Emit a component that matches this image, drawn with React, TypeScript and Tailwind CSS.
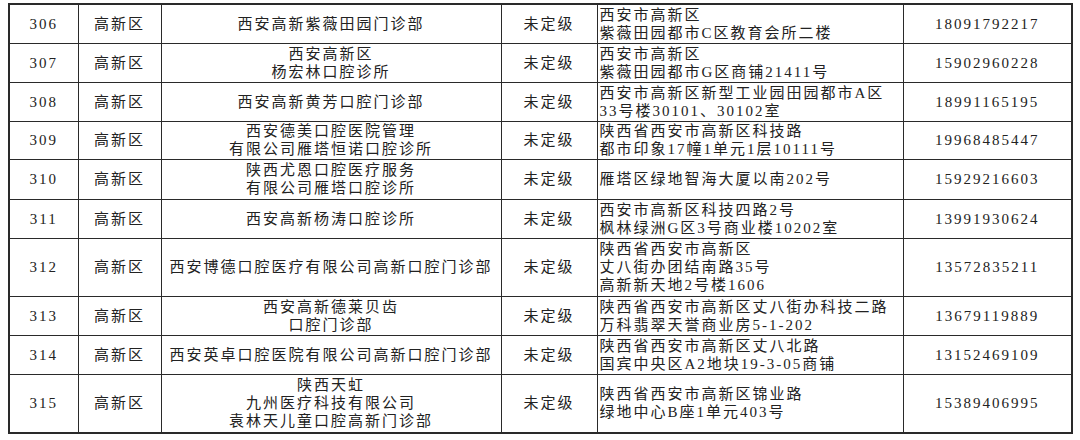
type Row = {
  no: string;
  area: string;
  name: string[];
  level: string;
  addr: string[];
  phone: string;
  h: string;
};

const rows: Row[] = [
  { no: '306', area: '高新区', name: ['西安高新紫薇田园门诊部'], level: '未定级', addr: ['西安市高新区', '紫薇田园都市C区教育会所二楼'], phone: '18091792217', h: 'h-[39px]' },
  { no: '307', area: '高新区', name: ['西安高新区', '杨宏林口腔诊所'], level: '未定级', addr: ['西安市高新区', '紫薇田园都市G区商铺21411号'], phone: '15902960228', h: 'h-[39px]' },
  { no: '308', area: '高新区', name: ['西安高新黄芳口腔门诊部'], level: '未定级', addr: ['西安市高新区新型工业园田园都市A区', '33号楼30101、30102室'], phone: '18991165195', h: 'h-[39px]' },
  { no: '309', area: '高新区', name: ['西安德美口腔医院管理', '有限公司雁塔恒诺口腔诊所'], level: '未定级', addr: ['陕西省西安市高新区科技路', '都市印象17幢1单元1层10111号'], phone: '19968485447', h: 'h-[38px]' },
  { no: '310', area: '高新区', name: ['陕西尤恩口腔医疗服务', '有限公司雁塔口腔诊所'], level: '未定级', addr: ['雁塔区绿地智海大厦以南202号'], phone: '15929216603', h: 'h-[40px]' },
  { no: '311', area: '高新区', name: ['西安高新杨涛口腔诊所'], level: '未定级', addr: ['西安市高新区科技四路2号', '枫林绿洲G区3号商业楼10202室'], phone: '13991930624', h: 'h-[39px]' },
  { no: '312', area: '高新区', name: ['西安博德口腔医疗有限公司高新口腔门诊部'], level: '未定级', addr: ['陕西省西安市高新区', '丈八街办团结南路35号', '高新新天地2号楼1606'], phone: '13572835211', h: 'h-[58px]' },
  { no: '313', area: '高新区', name: ['西安高新德莱贝齿', '口腔门诊部'], level: '未定级', addr: ['陕西省西安市高新区丈八街办科技二路', '万科翡翠天誉商业房5-1-202'], phone: '13679119889', h: 'h-[39px]' },
  { no: '314', area: '高新区', name: ['西安英卓口腔医院有限公司高新口腔门诊部'], level: '未定级', addr: ['陕西省西安市高新区丈八北路', '国宾中央区A2地块19-3-05商铺'], phone: '13152469109', h: 'h-[39px]' },
  { no: '315', area: '高新区', name: ['陕西天虹', '九州医疗科技有限公司', '袁林天儿童口腔高新门诊部'], level: '未定级', addr: ['陕西省西安市高新区锦业路', '绿地中心B座1单元403号'], phone: '15389406995', h: 'h-[59px]' },
];

const cell = 'border border-[#2a2a2a] p-0 align-middle';

export default function App() {
  return (
    <div className="w-[1080px] h-[440px] bg-white overflow-hidden pt-[3px] pl-[8px] font-['Liberation_Serif','Noto_Sans_CJK_SC',serif] text-[15px] leading-[18px] tracking-[2px] text-[#222]">
      <table className="table-fixed border-collapse w-[1063px] border-2 border-[#2a2a2a]">
        <colgroup>
          <col className="w-[69px]" />
          <col className="w-[83px]" />
          <col className="w-[340px]" />
          <col className="w-[96px]" />
          <col className="w-[306px]" />
          <col className="w-[169px]" />
        </colgroup>
        <tbody>
          {rows.map((r) => (
            <tr key={r.no} className={r.h}>
              <td className={`${cell} text-center`}>{r.no}</td>
              <td className={`${cell} text-center`}>{r.area}</td>
              <td className={`${cell} text-center`}>
                {r.name.map((l) => (
                  <div key={l} className="whitespace-nowrap">{l}</div>
                ))}
              </td>
              <td className={`${cell} text-center`}>{r.level}</td>
              <td className={`${cell} text-left pl-[2px]`}>
                {r.addr.map((l) => (
                  <div key={l} className="whitespace-nowrap">{l}</div>
                ))}
              </td>
              <td className={`${cell} text-center`}>{r.phone}</td>
            </tr>
          ))}
        </tbody>
      </table>
    </div>
  );
}
